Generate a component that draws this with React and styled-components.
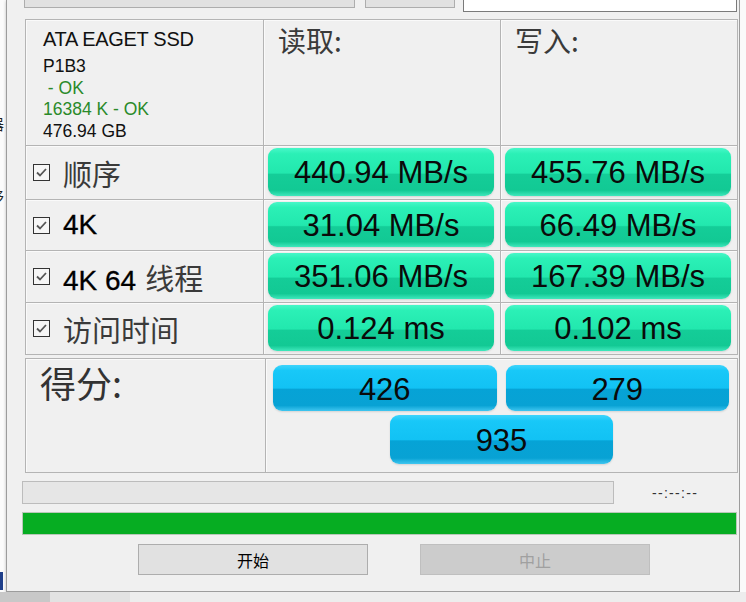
import React from "react";
import styled, { createGlobalStyle } from "styled-components";

const CJK = `"Noto Sans CJK SC", "Liberation Sans", sans-serif`;

const GlobalStyle = createGlobalStyle`
  html, body {
    margin: 0;
    padding: 0;
    background: #ffffff;
  }
  body {
    width: 746px;
    height: 602px;
    overflow: hidden;
    font-family: "Liberation Sans", Arial, sans-serif;
  }
`;

const Screen = styled.div`
  width: 746px;
  height: 602px;
  display: flex;
  flex-direction: column;
  overflow: hidden;
  background: #ffffff;
`;

const Desk = styled.div`
  display: flex;
  height: 592px;
`;

// the window behind this one peeks out on the left edge
const BehindStrip = styled.div`
  width: 6px;
  flex: none;
  background: #fbfbfb;
  overflow: hidden;
  display: flex;
  flex-direction: column;
  padding-top: 114px;
  box-sizing: border-box;
`;

const BehindGlyph = styled.span`
  display: block;
  margin-left: -11px;
  margin-bottom: ${(p) => p.gap || 0}px;
  font-family: ${CJK};
  font-size: 15px;
  line-height: 20px;
  color: #222;
`;

const BehindMark = styled.span`
  display: block;
  width: 3px;
  height: 18px;
  margin-top: auto;
  margin-bottom: 2px;
  background: #1f3f8a;
`;

const RightStrip = styled.div`
  width: 6px;
  flex: none;
  background: #fafafa;
`;

const Window = styled.div`
  width: 734px;
  flex: none;
  box-sizing: border-box;
  background: #f0f0f0;
  border-left: 1px solid #9c9c9c;
  border-right: 1px solid #9c9c9c;
  border-bottom: 1px solid #9c9c9c;
  box-shadow: 0 1px 3px rgba(0, 0, 0, 0.25);
`;

const TopBar = styled.div`
  display: flex;
  align-items: flex-start;
  height: 12px;
  padding-left: 17px;
  margin-bottom: 7px;
`;

const Combo = styled.div`
  width: ${(p) => p.w}px;
  height: 8px;
  margin-right: ${(p) => p.mr}px;
  box-sizing: border-box;
  background: #e1e1e1;
  border: 1px solid #adadad;
  border-top: none;
`;

const TextBox = styled.div`
  width: 274px;
  height: 12px;
  box-sizing: border-box;
  background: #ffffff;
  border: 1px solid #7a7a7a;
  border-top: none;
`;

const Table = styled.div`
  margin-left: 18px;
  width: 713px;
  box-sizing: border-box;
  display: grid;
  grid-template-columns: 237px 236px 236px;
  grid-template-rows: 125px 53px 50px 51px 51px;
  gap: 1px;
  background: #b4b4b4;
  border: 1px solid #b4b4b4;
`;

const Cell = styled.div`
  background: #f0f0f0;
  box-shadow: inset 1px 1px 0 #fafafa;
  box-sizing: border-box;
`;

const DeviceCell = styled(Cell)`
  padding: 7px 0 0 17px;
  font-size: 17.5px;
  line-height: 21.5px;
  color: #111;
`;

const DeviceName = styled.div`
  font-size: 20px;
  line-height: 24px;
  margin-bottom: 5px;
  letter-spacing: -0.3px;
`;

const InfoLine = styled.div`
  color: ${(p) => (p.ok ? "#2a8a2a" : "#111")};
  white-space: pre;
`;

const HeadCell = styled(Cell)`
  padding: 2px 0 0 14px;
  font-family: ${CJK};
  font-size: 28px;
  line-height: 36px;
  color: #3a3a3a;
`;

const LabelCell = styled(Cell)`
  display: flex;
  align-items: center;
  padding-left: 7px;
  gap: 13px;
  font-size: 28px;
  color: #000;
  -webkit-text-stroke: 0.3px #000;
`;

const Cjk = styled.span`
  font-family: ${CJK};
  font-size: 29px;
  color: #3a3a3a;
  -webkit-text-stroke: 0;
  margin-left: ${(p) => p.ml || 0}px;
`;

const ValueCell = styled(Cell)`
  padding: 2px 6px 3px 4px;
  display: flex;
`;

const Pill = styled.div`
  flex: 1;
  display: flex;
  align-items: center;
  justify-content: center;
  border-radius: 9px;
  font-size: ${(p) => p.fs || 31}px;
  color: #0a0a0a;
  box-shadow: 0 1px 2px rgba(0, 0, 0, 0.12);
`;

const GreenPill = styled(Pill)`
  padding-top: 2px;
  background: linear-gradient(
    to bottom,
    #48f7c8 0%,
    #2bf0b6 12%,
    #22e8ae 52%,
    #14cd98 55%,
    #12c994 88%,
    #3fe8bc 100%
  );
`;

const BluePill = styled(Pill)`
  width: 100%;
  flex: none;
  height: ${(p) => p.h}px;
  padding-top: 3px;
  box-sizing: border-box;
  background: linear-gradient(
    to bottom,
    #3fd4fb 0%,
    #18c8f8 12%,
    #12c2f4 50%,
    #06a3d6 53%,
    #08a2d4 88%,
    #3fc6f0 100%
  );
`;

const ScorePanel = styled.div`
  margin: 3px 0 0 18px;
  width: 713px;
  height: 115px;
  box-sizing: border-box;
  display: grid;
  grid-template-columns: 239px 471px;
  gap: 1px;
  background: #b4b4b4;
  border: 1px solid #b4b4b4;
`;

const ScoreLabel = styled(Cell)`
  padding: 1px 0 0 14px;
  font-family: ${CJK};
  font-size: 36px;
  line-height: 44px;
  color: #333;
`;

const ScoreGrid = styled(Cell)`
  padding: 6px 8px 0 7px;
  display: grid;
  grid-template-columns: 1fr 1fr;
  column-gap: 9px;
  row-gap: 4px;
  align-content: start;
`;

const TotalRow = styled.div`
  grid-column: 1 / 3;
  display: flex;
  justify-content: center;
  padding-left: 1px;
`;

const TotalBox = styled.div`
  width: 223px;
  display: flex;
`;

const ProgressRow = styled.div`
  display: flex;
  align-items: center;
  margin: 8px 0 0 15px;
`;

const Track = styled.div`
  width: 592px;
  height: 23px;
  box-sizing: border-box;
  background: #e6e6e6;
  border: 1px solid #bcbcbc;
`;

const Eta = styled.span`
  margin-left: 38px;
  font-size: 14px;
  color: #333;
  letter-spacing: 1.3px;
`;

const GreenBar = styled.div`
  margin: 8px 0 0 15px;
  width: 715px;
  height: 23px;
  box-sizing: border-box;
  background: #06ad22;
  border: 1px solid #b8c8b8;
`;

const ButtonRow = styled.div`
  display: flex;
  gap: 52px;
  margin-top: 9px;
  padding-left: 131px;
`;

const Button = styled.div`
  width: 230px;
  height: 31px;
  box-sizing: border-box;
  display: flex;
  align-items: center;
  justify-content: center;
  font-family: ${CJK};
  font-size: 16px;
  background: ${(p) => (p.disabled ? "#cccccc" : "#e1e1e1")};
  border: 1px solid ${(p) => (p.disabled ? "#bfbfbf" : "#adadad")};
  color: ${(p) => (p.disabled ? "#a0a0a0" : "#000")};
`;

const BottomStrip = styled.div`
  flex: 1;
  background: linear-gradient(to right, #c8c8c8 0, #c8c8c8 50px, #e2e2e2 50px, #e2e2e2 130px, #ededed 130px);
`;

const CheckBox = () => (
  <svg width="17" height="17" viewBox="0 0 17 17">
    <rect x="0.5" y="0.5" width="16" height="16" fill="#f6f6f6" stroke="#333" />
    <polyline points="4,8.5 7,11.5 13,5" fill="none" stroke="#555" strokeWidth="1.8" />
  </svg>
);

const rows = [
  { label: <Cjk>顺序</Cjk>, read: "440.94 MB/s", write: "455.76 MB/s" },
  { label: <span>4K</span>, read: "31.04 MB/s", write: "66.49 MB/s" },
  {
    label: (
      <span>
        4K 64<Cjk ml={9}>线程</Cjk>
      </span>
    ),
    read: "351.06 MB/s",
    write: "167.39 MB/s",
  },
  { label: <Cjk>访问时间</Cjk>, read: "0.124 ms", write: "0.102 ms" },
];

export default function App() {
  return (
    <>
      <GlobalStyle />
      <Screen>
        <Desk>
          <BehindStrip>
            <BehindGlyph gap={52}>器</BehindGlyph>
            <BehindGlyph>移</BehindGlyph>
            <BehindMark />
          </BehindStrip>
          <Window>
            <TopBar>
              <Combo w={331} mr={10} />
              <Combo w={90} mr={8} />
              <TextBox />
            </TopBar>

            <Table>
              <DeviceCell>
                <DeviceName>ATA EAGET SSD</DeviceName>
                <InfoLine>P1B3</InfoLine>
                <InfoLine ok>{" - OK"}</InfoLine>
                <InfoLine ok>16384 K - OK</InfoLine>
                <InfoLine>476.94 GB</InfoLine>
              </DeviceCell>
              <HeadCell>读取:</HeadCell>
              <HeadCell>写入:</HeadCell>
              {rows.map((r, i) => (
                <React.Fragment key={i}>
                  <LabelCell>
                    <CheckBox />
                    {r.label}
                  </LabelCell>
                  <ValueCell>
                    <GreenPill>{r.read}</GreenPill>
                  </ValueCell>
                  <ValueCell>
                    <GreenPill>{r.write}</GreenPill>
                  </ValueCell>
                </React.Fragment>
              ))}
            </Table>

            <ScorePanel>
              <ScoreLabel>得分:</ScoreLabel>
              <ScoreGrid>
                <BluePill h={46} fs={31}>426</BluePill>
                <BluePill h={46} fs={31}>279</BluePill>
                <TotalRow>
                  <TotalBox>
                    <BluePill h={49} fs={31}>935</BluePill>
                  </TotalBox>
                </TotalRow>
              </ScoreGrid>
            </ScorePanel>

            <ProgressRow>
              <Track />
              <Eta>--:--:--</Eta>
            </ProgressRow>
            <GreenBar />
            <ButtonRow>
              <Button>开始</Button>
              <Button disabled>中止</Button>
            </ButtonRow>
          </Window>
          <RightStrip />
        </Desk>
        <BottomStrip />
      </Screen>
    </>
  );
}
